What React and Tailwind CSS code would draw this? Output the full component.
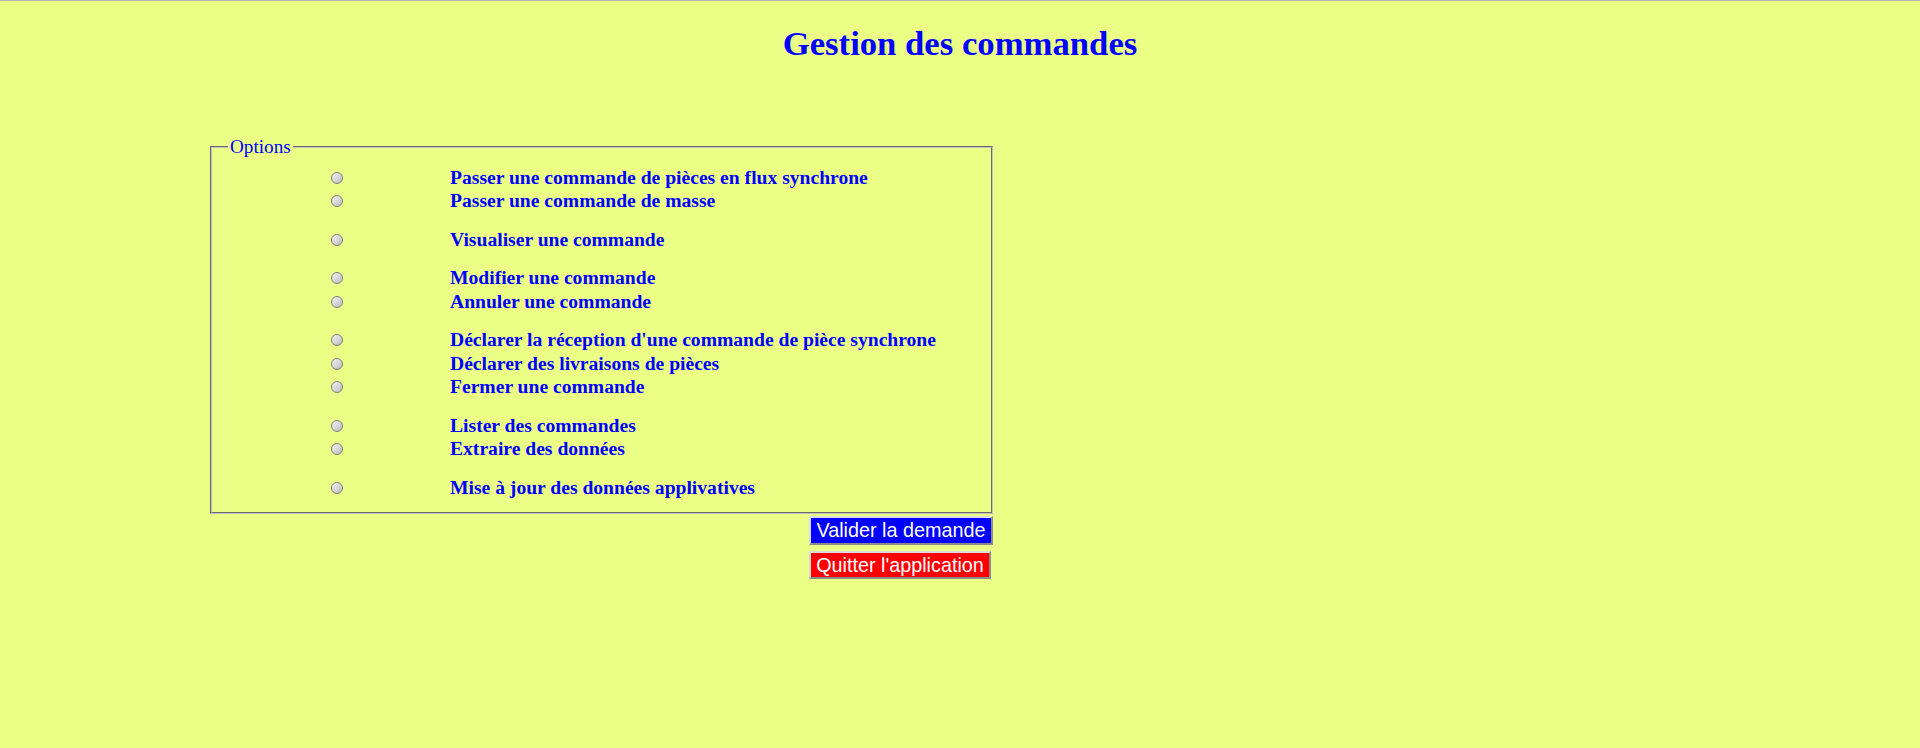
import React, { useState } from 'react';

const groups = [
  ['Passer une commande de pièces en flux synchrone', 'Passer une commande de masse'],
  ['Visualiser une commande'],
  ['Modifier une commande', 'Annuler une commande'],
  ["Déclarer la réception d'une commande de pièce synchrone", 'Déclarer des livraisons de pièces', 'Fermer une commande'],
  ['Lister des commandes', 'Extraire des données'],
  ['Mise à jour des données applivatives'],
];

const App = () => {
  const [choice, setChoice] = useState(null);

  return (
    <div className="min-h-screen bg-[#ebff87] border-t border-[#b4b4b4] font-['Liberation_Serif',serif] text-[#0000ff]">
      <h1 className="mt-[23px] text-center text-[34.7px] leading-[39px] font-bold">Gestion des commandes</h1>

      <form onSubmit={(e) => e.preventDefault()}>
        <fieldset className="mt-[73px] ml-[210px] w-[783px] border-2 [border-style:groove] border-[#c0c0c0] px-4 pt-2 pb-[12.5px]">
          <legend className="px-0.5 text-[19.2px] leading-[22px]">Options</legend>
          <div className="flex flex-col gap-[15px]">
            {groups.map((group, gi) => (
              <div key={gi} className="flex flex-col">
                {group.map((label) => (
                  <label key={label} className="flex items-center h-[23.5px] cursor-pointer">
                    <span className="w-[222px] shrink-0 pl-[103px] flex items-center">
                      <input
                        type="radio"
                        name="option"
                        checked={choice === label}
                        onChange={() => setChoice(label)}
                        className="appearance-none w-[12px] h-[12px] rounded-full border border-[#7e7e7e] bg-linear-to-br from-[#f4f4f4] to-[#bcbcbc] checked:bg-[#0000ff]"
                      />
                    </span>
                    <span className="text-[19.6px] leading-[22px] font-bold whitespace-nowrap">{label}</span>
                  </label>
                ))}
              </div>
            ))}
          </div>
        </fieldset>

        <div className="ml-[210px] w-[783px] flex justify-end mt-[2px]">
          <div className="flex flex-col items-start gap-[6px] font-['Liberation_Sans',Arial,sans-serif] text-[19.8px] leading-[22px] text-white">
            <button type="submit" className="w-[184px] h-[28.5px] flex items-center justify-center bg-[#0000ff] border-2 border-t-[#dcdcdc] border-l-[#dcdcdc] border-b-[#8c8c8c] border-r-[#8c8c8c]">
              Valider la demande
            </button>
            <button type="button" className="w-[182px] h-[28.5px] flex items-center justify-center bg-[#ff0000] border-2 border-t-[#dcdcdc] border-l-[#dcdcdc] border-b-[#8c8c8c] border-r-[#8c8c8c]">
              Quitter l'application
            </button>
          </div>
        </div>
      </form>
    </div>
  );
};

export default App;
